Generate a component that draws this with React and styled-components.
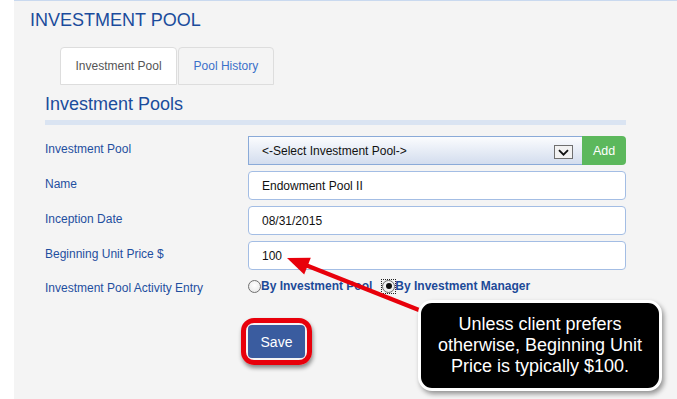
import React from 'react'
import styled, { createGlobalStyle } from 'styled-components'

const GlobalStyle = createGlobalStyle`
  html, body {
    margin: 0;
    padding: 0;
    background: #fff;
  }
  body {
    font-family: "Liberation Sans", Arial, sans-serif;
  }
`

const Page = styled.div`
  display: flex;
  width: 677px;
  height: 399px;
  overflow: hidden;
`

const Gutter = styled.div`
  flex: 0 0 14px;
  background: #fff;
`

const Panel = styled.div`
  position: relative;
  flex: 1;
  background: #f4f4f4;
  border-top: 1px solid #c9d9ef;
  padding-left: 16px;
`

const Title = styled.h1`
  margin: 8px 0 0;
  font-size: 18px;
  line-height: 22px;
  font-weight: normal;
  color: #1b4c9c;
`

const Tabs = styled.div`
  display: flex;
  margin: 16px 0 0 30px;
`

const Tab = styled.div`
  box-sizing: border-box;
  height: 38px;
  padding: 0 14.5px;
  display: flex;
  align-items: center;
  font-size: 12px;
  border: 1px solid #dddddd;
  border-radius: 4px 4px 0 0;
  background: ${p => (p.$active ? '#fff' : '#f4f4f4')};
  color: ${p => (p.$active ? '#555' : '#3a70c9')};

  & + & {
    margin-left: 1px;
  }
`

const Section = styled.div`
  margin-left: 15px;
  width: 581px;
`

const SectionTitle = styled.h2`
  margin: 8px 0 0;
  font-size: 18px;
  line-height: 22px;
  font-weight: normal;
  color: #1b4c9c;
`

const Rule = styled.div`
  height: 5px;
  margin-top: 5px;
  background: #dae4f2;
`

const Form = styled.div`
  margin-top: 11px;
`

const Row = styled.div`
  display: flex;
  align-items: center;
  height: ${p => (p.$short ? '20px' : '29px')};
  margin-bottom: 6px;
`

const Label = styled.div`
  flex: 0 0 203px;
  padding-bottom: ${p => (p.$short ? '0' : '3px')};
  padding-top: ${p => (p.$short ? '3px' : '0')};
  font-size: 12px;
  color: #1f4f9f;
`

const Field = styled.div`
  display: flex;
  flex: 1;
  height: 100%;
`

const Select = styled.div`
  box-sizing: border-box;
  flex: 1;
  display: flex;
  align-items: center;
  justify-content: space-between;
  padding: 0 9px 0 13px;
  border: 1px solid #8aaad8;
  border-right: none;
  background: linear-gradient(#fbfcfe, #d3ddee);
  font-size: 12px;
  color: #111;
`

const ArrowBox = styled.span`
  box-sizing: border-box;
  display: flex;
  align-items: center;
  justify-content: center;
  width: 19px;
  height: 14px;
  margin-top: 3px;
  border: 1px solid #6f6f6f;
  background: #f2f2f2;
`

const AddButton = styled.div`
  flex: 0 0 44px;
  display: flex;
  align-items: center;
  justify-content: center;
  background: #5cb85c;
  border-radius: 0 4px 4px 0;
  color: #fff;
  font-size: 12.5px;
`

const Input = styled.div`
  box-sizing: border-box;
  flex: 1;
  display: flex;
  align-items: center;
  padding-left: 13px;
  background: #fff;
  border: 1px solid #a3bde4;
  border-radius: 4px;
  font-size: 12px;
  color: #111;
`

const Radios = styled.div`
  display: flex;
  align-items: center;
  gap: 10px;
`

const RadioOption = styled.label`
  display: inline-flex;
  align-items: center;
  font-size: 12px;
  font-weight: bold;
  color: #1d4a98;
`

const Focus = styled.span`
  display: inline-flex;
  outline: ${p => (p.$focused ? '1px dotted #222' : 'none')};
  outline-offset: 0;
`

const RadioDot = styled.span`
  box-sizing: border-box;
  position: relative;
  width: 13px;
  height: 13px;
  border-radius: 50%;
  border: 1px solid #707070;
  background: radial-gradient(circle at 50% 40%, #fff, #e4e4e4);

  &::after {
    content: '';
    display: ${p => (p.$checked ? 'block' : 'none')};
    position: absolute;
    left: 2.5px;
    top: 2.5px;
    width: 6px;
    height: 6px;
    border-radius: 50%;
    background: #111;
  }
`

const Actions = styled.div`
  margin-top: 29px;
  padding-left: 203px;
`

const SaveWrap = styled.div`
  position: relative;
  display: inline-block;
`

const SaveButton = styled.div`
  display: flex;
  align-items: center;
  justify-content: center;
  width: 57px;
  height: 33px;
  background: #3a5c9f;
  border-radius: 4px;
  color: #fff;
  font-size: 14px;
`

const Highlight = styled.div`
  position: absolute;
  left: -7px;
  top: -7px;
  right: -7px;
  bottom: -7px;
  border: 5px solid #e8000b;
  border-radius: 13px;
  box-shadow: 1px 3px 4px rgba(0, 0, 0, 0.45);
`

const Pointer = styled.svg`
  position: absolute;
  left: 266px;
  top: 249px;
`

const Callout = styled.div`
  position: absolute;
  left: 404px;
  top: 299px;
  box-sizing: border-box;
  width: 244px;
  height: 91px;
  padding-top: 11px;
  background: #000;
  border: 3px solid #fff;
  border-radius: 14px;
  box-shadow: 2px 3px 5px rgba(0, 0, 0, 0.4);
  color: #fff;
  font-size: 18px;
  line-height: 21px;
  text-align: center;
`

const App = () => {
  return (
    <>
      <GlobalStyle />
      <Page>
        <Gutter />
        <Panel>
          <Title>INVESTMENT POOL</Title>
          <Tabs>
            <Tab $active>Investment Pool</Tab>
            <Tab>Pool History</Tab>
          </Tabs>
          <Section>
            <SectionTitle>Investment Pools</SectionTitle>
            <Rule />
            <Form>
              <Row>
                <Label>Investment Pool</Label>
                <Field>
                  <Select>
                    <span>&lt;-Select Investment Pool-&gt;</span>
                    <ArrowBox>
                      <svg width="13" height="9" viewBox="0 0 13 9">
                        <path d="M2 2.2l4.5 4.5 4.5-4.5" fill="none" stroke="#111" strokeWidth="1.8" />
                      </svg>
                    </ArrowBox>
                  </Select>
                  <AddButton>Add</AddButton>
                </Field>
              </Row>
              <Row>
                <Label>Name</Label>
                <Field>
                  <Input>Endowment Pool II</Input>
                </Field>
              </Row>
              <Row>
                <Label>Inception Date</Label>
                <Field>
                  <Input>08/31/2015</Input>
                </Field>
              </Row>
              <Row>
                <Label>Beginning Unit Price $</Label>
                <Field>
                  <Input>100</Input>
                </Field>
              </Row>
              <Row $short>
                <Label $short>Investment Pool Activity Entry</Label>
                <Radios>
                  <RadioOption>
                    <Focus>
                      <RadioDot />
                    </Focus>
                    By Investment Pool
                  </RadioOption>
                  <RadioOption>
                    <Focus $focused>
                      <RadioDot $checked />
                    </Focus>
                    By Investment Manager
                  </RadioOption>
                </Radios>
              </Row>
            </Form>
            <Actions>
              <SaveWrap>
                <SaveButton>Save</SaveButton>
                <Highlight />
              </SaveWrap>
            </Actions>
          </Section>

          <Pointer width="160" height="72" viewBox="0 0 160 72">
            <g transform="translate(-280,-250)">
              <line x1="303" y1="264" x2="424" y2="312" stroke="#e8000b" strokeWidth="4.5" />
              <polygon points="287,258 304.2,274.5 310.8,257.7" fill="#e8000b" />
            </g>
          </Pointer>

          <Callout>
            Unless client prefers
            <br />
            otherwise, Beginning Unit
            <br />
            Price is typically $100.
          </Callout>
        </Panel>
      </Page>
    </>
  )
}

export default App
